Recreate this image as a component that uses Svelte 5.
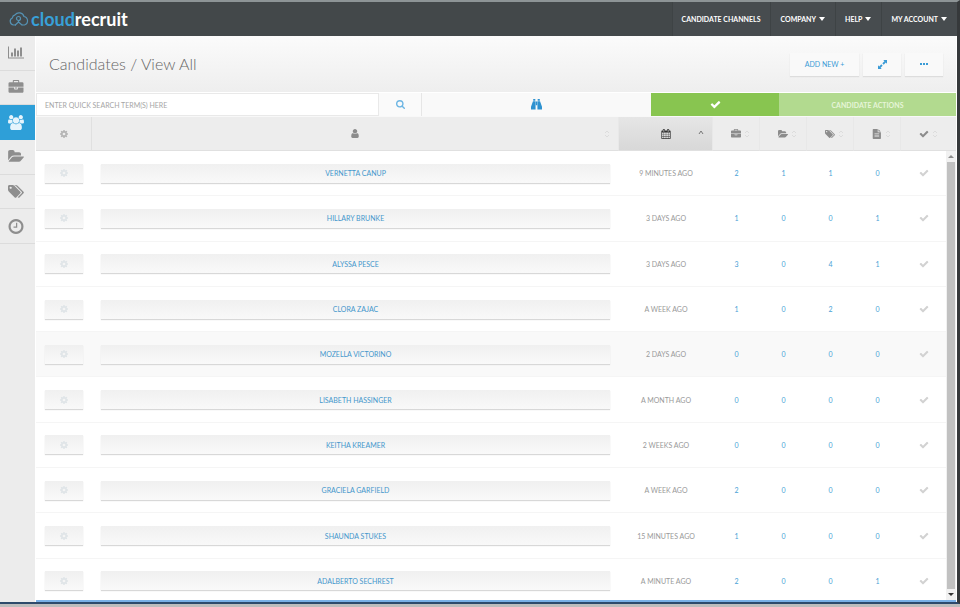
<script>
	const icons = {
		chart: {
			box: '0 0 2048 1792',
			d: 'M640 896v512h-256v-512h256zm384-512v1024h-256v-1024h256zm1024 1152v128h-2048v-1536h128v1408h1920zm-640-896v768h-256v-768h256zm384-384v1152h-256v-1152h256z'
		},
		briefcase: {
			box: '0 0 1792 1792',
			d: 'M640 256h512v-128h-512v128zm1152 640v480q0 66-47 113t-113 47h-1472q-66 0-113-47t-47-113v-480h672v160q0 26 19 45t45 19h320q26 0 45-19t19-45v-160h672zm-768 0v128h-256v-128h256zm768-480v384h-1792v-384q0-66 47-113t113-47h352v-160q0-40 28-68t68-28h576q40 0 68 28t28 68v160h352q66 0 113 47t47 113z'
		},
		group: {
			box: '0 0 1920 1792',
			d: 'M593 896q-162 5-265 128H194q-82 0-138-40.500T0 865q0-353 124-353 6 0 43.500 21t97.500 42.500T384 597q67 0 133-23-5 37-5 66 0 139 81 256zM1664 1533q0 120-73 189.500t-194 69.500H523q-121 0-194-69.500T256 1533q0-53 3.500-103.500t14-109T300 1212t43-97.500 62-81 85.500-53.500T602 960q10 0 43 21.500t73 48 107 48 135 21.500 135-21.500 107-48 73-48 43-21.500q61 0 111.500 20t85.500 53.500 62 81 43 97.500 26.500 108.500 14 109 3.500 103.500zM640 256q0 106-75 181t-181 75-181-75-75-181 75-181T384 0t181 75 75 181zM1344 640q0 159-112.500 271.500T960 1024 688.500 911.500 576 640t112.500-271.500T960 256t271.500 112.500T1344 640zM1920 865q0 78-56 118.500t-138 40.500h-134q-103-123-265-128 81-117 81-256 0-29-5-66 66 23 133 23 59 0 119-21.500t97.500-42.500 43.500-21q124 0 124 353zM1792 256q0 106-75 181t-181 75-181-75-75-181 75-181 181-75 181 75 75 181z'
		},
		folder: {
			box: '0 0 1879 1792',
			d: 'M1879 952q0 31-31 66l-336 396q-43 51-120.500 86.500t-143.500 35.500h-1088q-34 0-60.500-13t-26.500-43q0-31 31-66l336-396q43-51 120.500-86.500t143.500-35.500h1088q34 0 60.500 13t26.500 43zm-343-344v160h-832q-94 0-197 47.500t-164 119.500l-337 396-5 6v-985q0-92 66-158t158-66h320q92 0 158 66t66 158v32h544q92 0 158 66t66 158z'
		},
		tags: {
			box: '0 0 1920 1792',
			d: 'M448 448q0-53-37.500-90.500t-90.500-37.500-90.500 37.500-37.500 90.500 37.500 90.500 90.500 37.500 90.500-37.500 37.500-90.500zm1067 576q0 53-37 90l-491 492q-39 37-91 37-53 0-90-37l-715-716q-38-37-64.500-101t-26.500-117v-416q0-52 38-90t90-38h416q53 0 117 26.500t102 64.500l715 714q37 39 37 91zm384 0q0 53-37 90l-491 492q-39 37-91 37-36 0-59-14t-53-45l470-470q37-37 37-90 0-52-37-91l-715-714q-38-38-102-64.500t-117-26.500h224q53 0 117 26.500t102 64.500l715 714q37 39 37 91z'
		},
		clock: {
			box: '128 128 1536 1536',
			d: 'M1024 544v448q0 14-9 23t-23 9h-320q-14 0-23-9t-9-23v-64q0-14 9-23t23-9h224v-352q0-14 9-23t23-9h64q14 0 23 9t9 23zm416 352q0-148-73-273t-198-198-273-73-273 73-198 198-73 273 73 273 198 198 273 73 273-73 198-198 73-273zm224 0q0 209-103 385.500t-279.500 279.500-385.500 103-385.500-103-279.500-279.500-103-385.500 103-385.500 279.500-279.500 385.500-103 385.500 103 279.500 279.500 103 385.500z'
		},
		check: {
			box: '0 0 1792 1792',
			d: 'M1671 566q0 40-28 68l-724 724-136 136q-28 28-68 28t-68-28l-136-136-362-362q-28-28-28-68t28-68l136-136q28-28 68-28t68 28l294 295 656-657q28-28 68-28t68 28l136 136q28 28 28 68z'
		},
		search: {
			box: '64 128 1664 1664',
			d: 'M1216 832q0-185-131.500-316.500t-316.500-131.500-316.500 131.500-131.500 316.500 131.500 316.500 316.500 131.500 316.500-131.500 131.500-316.500zm512 832q0 52-38 90t-90 38q-54 0-90-38l-343-342q-179 124-399 124-143 0-273.500-55.500t-225-150-150-225-55.500-273.500 55.500-273.500 150-225 225-150 273.500-55.500 273.500 55.500 225 150 150 225 55.500 273.500q0 220-124 399l343 343q37 37 37 90z'
		},
		user: {
			box: '256 128 1280 1536',
			d: 'M1536 1399q0 109-62.500 187t-150.500 78h-854q-88 0-150.500-78t-62.500-187q0-85 8.500-160.500t31.500-152 58.500-131 94-89 134.500-34.500q131 128 313 128t313-128q76 0 134.500 34.500t94 89 58.500 131 31.500 152 8.500 160.500zm-256-887q0 159-112.500 271.500t-271.500 112.500-271.500-112.500-112.500-271.500 112.500-271.500 271.500-112.500 271.500 112.500 112.500 271.500z'
		},
		calendar: {
			box: '64 0 1664 1792',
			d: 'M192 1664h288v-288h-288v288zm352 0h320v-288h-320v288zm-352-352h288v-320h-288v320zm352 0h320v-320h-320v320zm-352-384h288v-288h-288v288zm736 736h320v-288h-320v288zm-384-736h320v-288h-320v288zm768 736h288v-288h-288v288zm-384-352h320v-320h-320v320zm-352-864v-288q0-13-9.500-22.500t-22.500-9.500h-64q-13 0-22.500 9.500t-9.500 22.500v288q0 13 9.500 22.500t22.500 9.500h64q13 0 22.500-9.500t9.500-22.500zm736 864h288v-320h-288v320zm-384-384h320v-288h-320v288zm384 0h288v-288h-288v288zm32-480v-288q0-13-9.500-22.500t-22.500-9.500h-64q-13 0-22.500 9.500t-9.500 22.500v288q0 13 9.500 22.500t22.500 9.500h64q13 0 22.500-9.500t9.500-22.500zm384-64v1280q0 52-38 90t-90 38h-1408q-52 0-90-38t-38-90v-1280q0-52 38-90t90-38h128v-96q0-66 47-113t113-47h64q66 0 113 47t47 113v96h384v-96q0-66 47-113t113-47h64q66 0 113 47t47 113v96h128q52 0 90 38t38 90z'
		},
		file: {
			box: '0 0 12 14',
			d: 'M1 0h6v4.500h4.500v8.500a1 1 0 0 1-1 1H1a1 1 0 0 1-1-1V1a1 1 0 0 1 1-1zm7 .2L11.300 3.500H8zM2.500 6.200v1.300h6.500v-1.300zm0 3v1.300h6.500v-1.300z'
		},
		binoculars: {
			box: '0 0 14 14',
			d: 'M2.800 0h2.700v2.300H2.800zM8.500 0h2.700v2.300H8.500zM2.500 2.800h3.300V13.500H0V10zM11.500 2.800H8.200V13.500H14V10zM6.200 3.300h1.600v4.700H6.200z'
		},
		expand: {
			box: '0 0 12 12',
			d: 'M7 0h5v5l-1.600-1.600-2.800 2.800-1.800-1.800 2.800-2.800zM5 12H0V7l1.600 1.600 2.800-2.800 1.800 1.800-2.800 2.800z'
		},
		cog: {
			box: '0 0 14 14',
			d: 'M5.900 0h2.200l.4 1.900 1.200.5 1.600-1.100 1.500 1.500-1.100 1.600.5 1.200 1.800.3v2.200l-1.800.4-.5 1.200 1.100 1.600-1.500 1.500-1.600-1.100-1.200.5-.4 1.800H5.900l-.4-1.800-1.200-.5-1.600 1.100-1.500-1.500 1.100-1.600-.5-1.200L0 8.100V5.900l1.800-.3.5-1.200-1.100-1.600 1.500-1.500 1.600 1.100 1.200-.5zM7 4.600a2.400 2.400 0 1 0 0 4.800 2.400 2.400 0 0 0 0-4.800z'
		}
	};

	const menu = [
		{ label: 'Candidate Channels', caret: false },
		{ label: 'Company', caret: true },
		{ label: 'Help', caret: true },
		{ label: 'My Account', caret: true }
	];

	const sections = [
		{ icon: 'chart', label: 'Reports' },
		{ icon: 'briefcase', label: 'Jobs' },
		{ icon: 'group', label: 'Candidates' },
		{ icon: 'folder', label: 'Folders' },
		{ icon: 'tags', label: 'Tags' },
		{ icon: 'clock', label: 'History' }
	];

	const counters = [
		{ icon: 'briefcase', label: 'Jobs' },
		{ icon: 'folder', label: 'Folders' },
		{ icon: 'tags', label: 'Tags' },
		{ icon: 'file', label: 'Documents' }
	];

	const candidates = [
		{ name: 'Vernetta Canup', updated: '9 minutes ago', counts: [2, 1, 1, 0] },
		{ name: 'Hillary Brunke', updated: '3 days ago', counts: [1, 0, 0, 1] },
		{ name: 'Alyssa Pesce', updated: '3 days ago', counts: [3, 0, 4, 1] },
		{ name: 'Clora Zajac', updated: 'a week ago', counts: [1, 0, 2, 0] },
		{ name: 'Mozella Victorino', updated: '2 days ago', counts: [0, 0, 0, 0] },
		{ name: 'Lisabeth Hassinger', updated: 'a month ago', counts: [0, 0, 0, 0] },
		{ name: 'Keitha Kreamer', updated: '2 weeks ago', counts: [0, 0, 0, 0] },
		{ name: 'Graciela Garfield', updated: 'a week ago', counts: [2, 0, 0, 0] },
		{ name: 'Shaunda Stukes', updated: '15 minutes ago', counts: [1, 0, 0, 0] },
		{ name: 'Adalberto Sechrest', updated: 'a minute ago', counts: [2, 0, 0, 1] }
	];

	let active = $state('Candidates');
	let highlighted = $state(4);
	let query = $state('');
</script>

{#snippet icon(name)}
	<svg class="icon" viewBox={icons[name].box} aria-hidden="true">
		<path d={icons[name].d} fill-rule="evenodd" />
	</svg>
{/snippet}

{#snippet sorter()}
	<svg class="sorter" viewBox="0 0 6 10" aria-hidden="true">
		<path d="M1 4l2-2 2 2M1 6l2 2 2-2" />
	</svg>
{/snippet}

<div class="window">
	<header class="topbar">
		<a class="brand" href="#home">
			<svg class="logo" viewBox="0 0 20 16" aria-hidden="true">
				<path d="M7 14H4.500A3.700 3.700 0 0 1 3.300 7 3.800 3.800 0 0 1 6 3.800 5.200 5.200 0 0 1 15 5.500a4.400 4.400 0 0 1 .5 8.500H13" />
				<circle cx="9.500" cy="7.500" r="2" />
				<path d="M9.500 9.500v1.500L6 14.300M9.500 11l3.800 3.300" />
			</svg>
			<span class="wordmark"><span class="blue">cloud</span>recruit</span>
		</a>
		<nav class="menu">
			{#each menu as item}
				<a href="#menu">
					{item.label}
					{#if item.caret}<span class="caret"></span>{/if}
				</a>
			{/each}
		</nav>
	</header>

	<div class="body">
		<nav class="sidebar">
			<div class="sections">
				{#each sections as section}
					<button
						class:active={active === section.label}
						aria-label={section.label}
						onclick={() => (active = section.label)}
					>
						{@render icon(section.icon)}
					</button>
				{/each}
			</div>
		</nav>

		<main>
			<div class="heading">
				<h1>Candidates / View All</h1>
				<div class="actions">
					<button class="add">Add new +</button>
					<button class="small" aria-label="Expand">{@render icon('expand')}</button>
					<button class="small" aria-label="More">
						<span class="dot"></span><span class="dot"></span><span class="dot"></span>
					</button>
				</div>
			</div>

			<div class="toolbar">
				<input
					type="text"
					aria-label="Quick search"
					placeholder="Enter quick search term(s) here"
					bind:value={query}
				/>
				<button class="find" aria-label="Search">{@render icon('search')}</button>
				<button class="advanced" aria-label="Advanced search">{@render icon('binoculars')}</button>
				<button class="select-all" aria-label="Select all">{@render icon('check')}</button>
				<button class="bulk">Candidate actions</button>
			</div>

			<div class="listing">
				<div class="scroller">
					<table>
						<colgroup>
							<col class="col-cog" />
							<col />
							<col class="col-date" />
							{#each counters as counter}<col class="col-count" />{/each}
							<col class="col-tick" />
						</colgroup>
						<thead>
							<tr>
								<th class="cog" aria-label="Options">{@render icon('cog')}</th>
								<th class="person" aria-label="Name">
									<div class="head">{@render icon('user')}{@render sorter()}</div>
								</th>
								<th class="sorted" aria-label="Updated">
									<div class="head">
										{@render icon('calendar')}
										<svg class="sorter" viewBox="0 0 6 10" aria-hidden="true">
											<path d="M1 5l2-3 2 3" />
										</svg>
									</div>
								</th>
								{#each counters as counter}
									<th aria-label={counter.label}>
										<div class="head">{@render icon(counter.icon)}{@render sorter()}</div>
									</th>
								{/each}
								<th class="last" aria-label="Select">
									<div class="head">{@render icon('check')}{@render sorter()}</div>
								</th>
							</tr>
						</thead>
						<tbody>
							{#each candidates as candidate, i}
								<tr class:hover={highlighted === i} onmouseenter={() => (highlighted = i)}>
									<td>
										<button class="options" aria-label="Options for {candidate.name}">
											{@render icon('cog')}
										</button>
									</td>
									<td><button class="name">{candidate.name}</button></td>
									<td>{candidate.updated}</td>
									{#each candidate.counts as count}
										<td><a href="#count">{count}</a></td>
									{/each}
									<td>
										<button class="tick" aria-label="Select {candidate.name}">
											{@render icon('check')}
										</button>
									</td>
								</tr>
							{/each}
						</tbody>
					</table>
				</div>
				<div class="rail" aria-hidden="true">
					<div class="corner"></div>
					<span class="arrow up"></span>
					<div class="thumb"></div>
					<span class="arrow down"></span>
				</div>
			</div>
		</main>
	</div>
</div>

<style>
	:global(body) {
		background: #bdbdbd;
	}

	.window {
		display: flex;
		flex-direction: column;
		box-sizing: border-box;
		height: calc(100vh - 3px);
		border-top: 2px solid #8d9496;
		border-right: 3px solid #36393b;
		border-bottom: 2px solid #2e4a6b;
		font-family: Lato, 'Open Sans', sans-serif;
		font-size: 7px;
		text-transform: uppercase;
		color: #999;
		background: #fff;
	}

	a {
		color: #4a9fd6;
		text-decoration: none;
	}

	button {
		display: flex;
		align-items: center;
		justify-content: center;
		margin: 0;
		padding: 0;
		border: 0;
		background: none;
		font: inherit;
		text-transform: inherit;
		color: inherit;
		cursor: pointer;
	}

	.icon {
		display: block;
		width: 11px;
		height: 11px;
		fill: currentColor;
	}

	/* top bar */
	.topbar {
		display: flex;
		justify-content: space-between;
		flex: none;
		height: 34px;
		background: #43484a;
	}

	.brand {
		display: flex;
		align-items: center;
		gap: 2px;
		padding-left: 9px;
	}

	.logo {
		width: 20px;
		height: 16px;
		fill: none;
		stroke: #5592b4;
		stroke-width: 1.2;
	}

	.wordmark {
		font-size: 18px;
		font-weight: 700;
		line-height: 20px;
		text-transform: none;
		color: #fff;
	}

	.blue {
		color: #38a0d8;
	}

	.menu {
		display: flex;
		background: #474c4f;
	}

	.menu a {
		display: flex;
		align-items: center;
		gap: 3px;
		padding: 0 10px 0 9px;
		border-left: 1px solid #3e4345;
		font-weight: 700;
		color: #fff;
	}

	.caret {
		border: 3px solid transparent;
		border-top: 4px solid #fff;
		border-bottom: 0;
	}

	.body {
		display: flex;
		flex: 1;
		min-height: 0;
	}

	/* sidebar */
	.sidebar {
		flex: none;
		width: 35px;
		background: #ececec;
	}

	.sections {
		display: grid;
		grid-auto-rows: 1fr;
		height: 208px;
	}

	.sidebar button {
		padding-right: 4px;
		border-bottom: 1px solid #dcdcdc;
		color: #8e8e8e;
	}

	.sidebar .icon {
		width: 16px;
		height: 15px;
	}

	.sidebar .active {
		border-color: #2e9fd8;
		background: #2e9fd8;
		color: #e6f4fc;
	}

	main {
		display: flex;
		flex-direction: column;
		flex: 1;
		min-width: 0;
		padding: 0 1px;
	}

	/* heading */
	.heading {
		display: flex;
		align-items: center;
		justify-content: space-between;
		flex: none;
		height: 56px;
		padding: 0 13px;
		border-bottom: 1px solid #fff;
		background: linear-gradient(#fbfbfb, #eee);
	}

	h1 {
		margin: 0;
		font-size: 16px;
		font-weight: 300;
		line-height: 20px;
		text-transform: none;
		color: #666;
	}

	.actions {
		display: flex;
		gap: 4px;
	}

	.actions button {
		height: 23px;
		background: #f9f9f9;
		box-shadow: 0 1px 1px #ddd;
		color: #3a9bd6;
	}

	.actions .add {
		width: 69px;
	}

	.small {
		gap: 1px;
		width: 38px;
	}

	.actions .icon {
		width: 9px;
		height: 9px;
	}

	.dot {
		width: 2px;
		height: 2px;
		background: #3a9bd6;
	}

	/* search and bulk actions */
	.toolbar {
		display: grid;
		grid-template-columns: 343fr 42fr 230fr 128fr 177fr;
		flex: none;
		height: 23px;
		border-bottom: 1px solid #f8f8f8;
	}

	.toolbar input {
		box-sizing: border-box;
		min-width: 0;
		padding: 0 8px;
		border: 1px solid #e9e9e9;
		background: #fff;
		font: inherit;
		text-transform: inherit;
		color: #777;
	}

	.toolbar input::placeholder {
		color: #a5a5a5;
	}

	.find {
		background: #fafafa;
		color: #6cb5e3;
	}

	.find .icon {
		width: 9px;
		height: 9px;
	}

	.advanced {
		border-left: 1px solid #e6e6e6;
		background: #f9f9f9;
		color: #2e92d0;
	}

	.select-all {
		background: #88c550;
		color: #fff;
	}

	.bulk {
		background: #b2da8f;
		color: #e6f5d8;
		font-weight: 700;
	}

	/* candidates */
	.listing {
		display: flex;
		flex: 1;
		min-height: 0;
		border-bottom: 2px solid #79b0e6;
	}

	.scroller {
		flex: 1;
		min-width: 0;
		overflow-y: auto;
		scrollbar-width: none;
	}

	/* a little taller than the viewport, so the last row runs under its edge */
	table {
		width: 100%;
		height: calc(100% + 4px);
		border-collapse: separate;
		border-spacing: 0;
		table-layout: fixed;
	}

	.col-cog {
		width: 56px;
	}

	.col-date {
		width: 94px;
	}

	.col-count {
		width: 47px;
	}

	.col-tick {
		width: 45px;
	}

	th {
		position: sticky;
		top: 0;
		box-sizing: border-box;
		height: 34px;
		padding: 0;
		border-right: 1px solid #e8e8e8;
		border-bottom: 1px solid #e0e0e0;
		background: #ededed;
		color: #8c8c8c;
	}

	.last {
		border-right: 0;
	}

	.cog {
		border-right-color: #e0e0e0;
		color: #b5b5b5;
	}

	.cog .icon,
	.options .icon {
		width: 8px;
		height: 8px;
		margin: 0 auto;
	}

	/* side columns of equal width keep the glyph centred */
	.head {
		display: grid;
		grid-template-columns: 1fr auto 1fr;
		align-items: center;
	}

	.head .icon {
		grid-column: 2;
		width: 10px;
		height: 10px;
	}

	.person .icon {
		width: 8px;
		height: 9px;
	}

	.sorter {
		width: 6px;
		height: 10px;
		margin-left: 3px;
		fill: none;
		stroke: #dcdcdc;
	}

	.person .sorter,
	.sorted .sorter {
		justify-self: end;
		margin-right: 8px;
	}

	.sorted {
		background: linear-gradient(#e6e6e6, #d8d8d8);
		color: #333;
	}

	.sorted .sorter {
		stroke: #777;
	}

	td {
		box-sizing: border-box;
		height: 45px;
		padding: 0;
		border-bottom: 1px solid #f5f5f5;
		text-align: center;
	}

	.hover td {
		background: #f9f9f9;
	}

	.options,
	.name {
		width: calc(100% - 18px);
		height: 19px;
		margin: 0 auto;
		background: linear-gradient(#f0f0f0, #f9f9f9);
		box-shadow: 0 1px 1px #d8d8d8;
		color: #4497cc;
	}

	.options {
		color: #e0e5e8;
	}

	.tick {
		margin: 0 auto;
		color: #d2d2d2;
	}

	.tick .icon {
		width: 10px;
		height: 10px;
	}

	/* scroll rail */
	.rail {
		display: flex;
		flex-direction: column;
		align-items: center;
		flex: none;
		width: 10px;
		background: #f1f1f1;
	}

	.corner {
		box-sizing: border-box;
		width: 100%;
		height: 34px;
		border-bottom: 1px solid #e0e0e0;
		background: #ededed;
	}

	.thumb {
		flex: 1;
		width: 8px;
		background: #c1c1c1;
	}

	.arrow {
		margin: 4px 0;
		border: 3px solid transparent;
	}

	.arrow.up {
		border-top: 0;
		border-bottom-color: #8c8c8c;
	}

	.arrow.down {
		border-bottom: 0;
		border-top-color: #333;
	}
</style>
